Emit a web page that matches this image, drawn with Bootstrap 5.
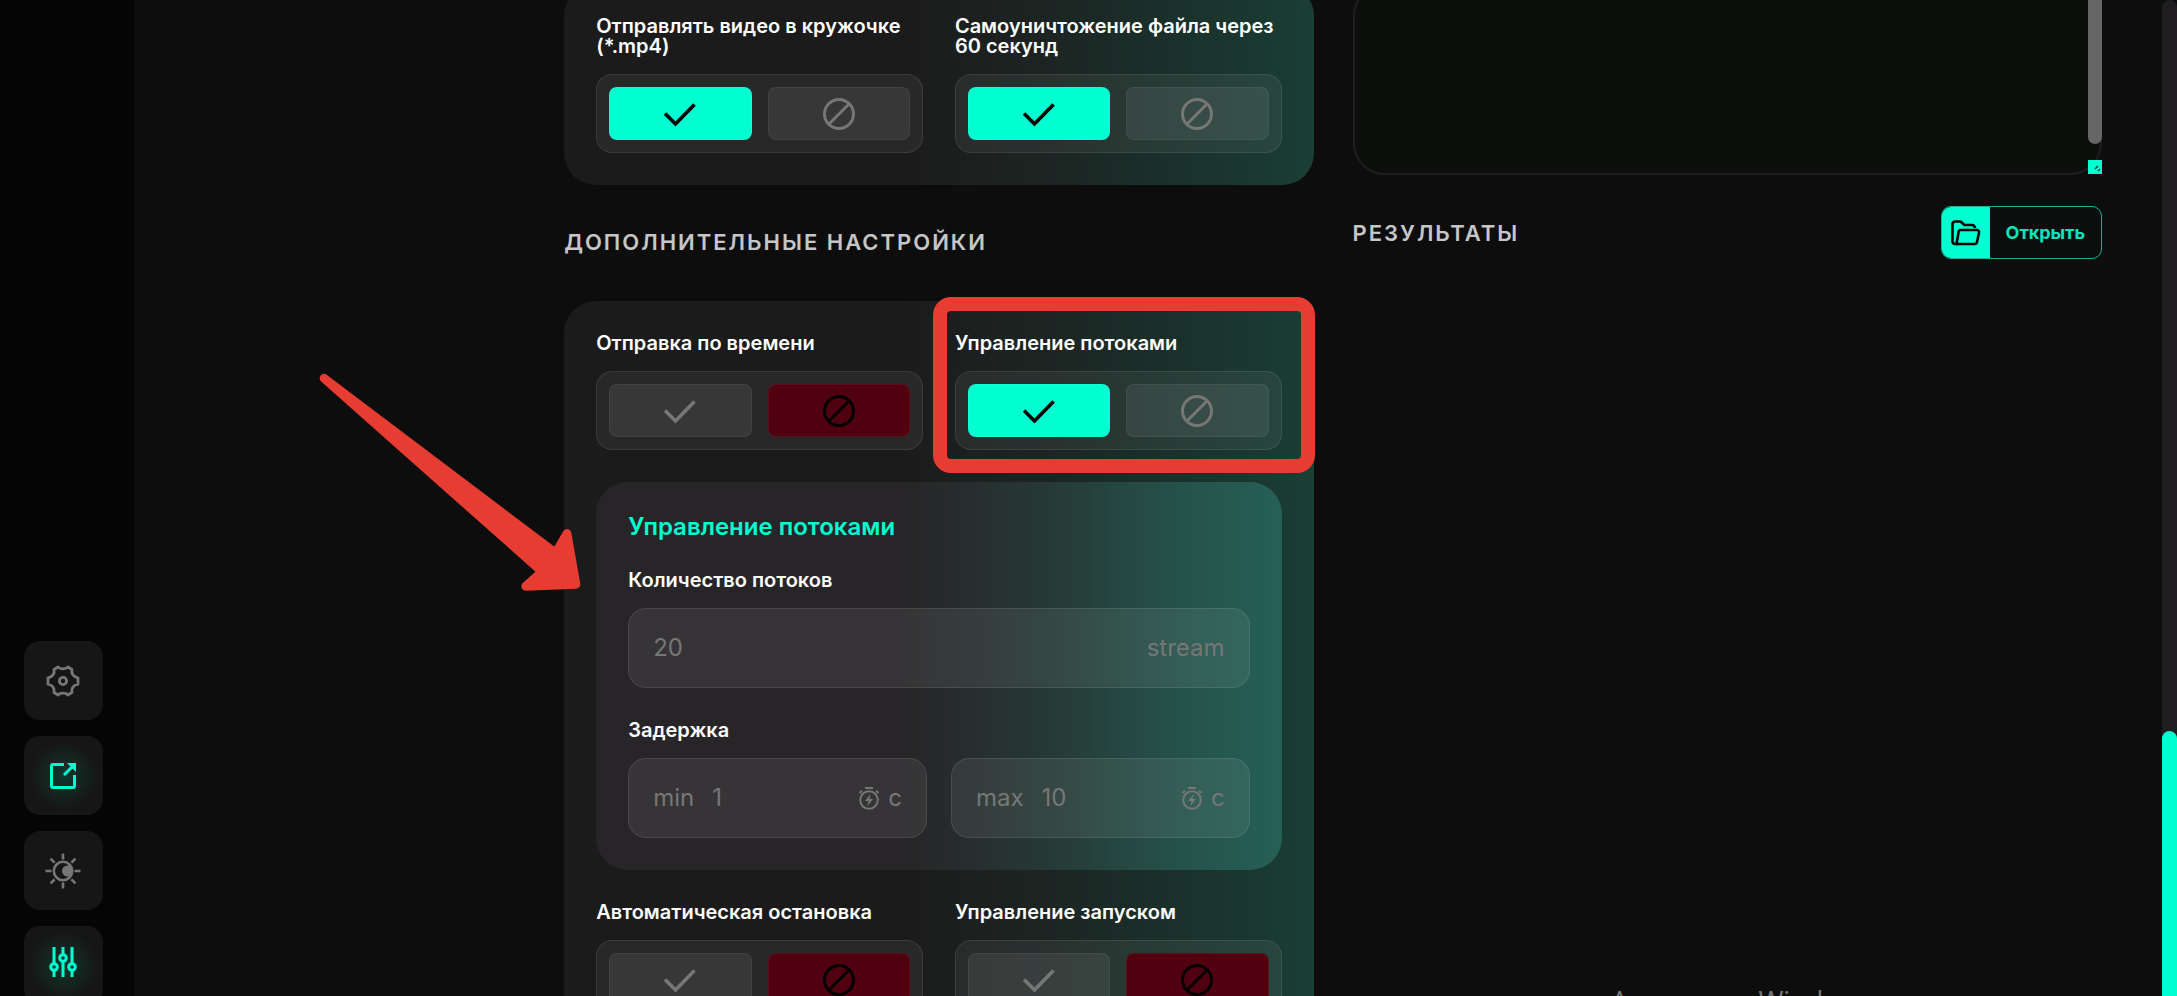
<!DOCTYPE html>
<html lang="ru" data-bs-theme="dark">
<head>
<meta charset="utf-8">
<meta name="viewport" content="width=device-width, initial-scale=1">
<title>Дополнительные настройки</title>
<link href="https://cdn.jsdelivr.net/npm/bootstrap@5.3.0/dist/css/bootstrap.min.css" rel="stylesheet">
<style>
  :root { --accent: #00ffd1; --muted: #777; --red: #e63c31; }
  body { background: #0e0d0e; font-family: Inter, "Noto Sans", sans-serif; color: #fff; }

  /* left rail */
  .rail { width: 134px; background: #050505; }
  .rail-list { margin-bottom: -9px; gap: 16px; }
  .rail-btn { width: 79px; height: 79px; padding: 0; border: 0; border-radius: 16px; background: #161616; color: var(--muted); }
  .rail-btn.lit { color: var(--accent); background: radial-gradient(circle, #10392f 0, #14261f 30%, #161616 62%); }

  /* three-part workspace */
  .workspace { display: grid; grid-template-columns: minmax(0, 391fr) minmax(0, 749fr) minmax(0, 749fr); gap: 39px; padding-right: 60px; min-width: 0; }
  .pane { margin-top: -16px; }
  .panel { border-radius: 32px; padding: 32px; background: linear-gradient(90deg, #1c1b1c 45%, #1c2523 65%, #1a342d 86%, #1a3e35 100%); }
  .panel-inner { border-radius: 32px; padding: 32px; margin: 32px 0; background: linear-gradient(90deg, #272527 45%, #263835 65%, #25524a 85%, #256056 100%); }
  .pair { display: grid; grid-template-columns: minmax(0, 1fr) minmax(0, 1fr); gap: 32px; }
  .pair-narrow { gap: 24px; }
  .section-title { font-size: 22px; line-height: 26px; font-weight: 600; letter-spacing: 2px; color: #c6c6c6; margin: 0; }
  .between { margin: 44px 0 46px; }
  .caption { display: block; font-size: 20px; line-height: 20px; font-weight: 600; margin: 0 0 18px; }
  .field-group { margin-top: 32px; }
  .inner-title { font-size: 24px; line-height: 26px; font-weight: 600; color: var(--accent); margin: 0 0 30px; }

  /* yes / no switch */
  .switch { display: grid; grid-template-columns: 1fr 1fr; gap: 16px; padding: 12px; border-radius: 16px;
            border: 1px solid rgba(255,255,255,.09); background: rgba(255,255,255,.06); }
  .opt { height: 53px; border-radius: 8px; border: 1px solid rgba(255,255,255,.06); background: rgba(255,255,255,.07);
         color: var(--muted); display: flex; align-items: center; justify-content: center; cursor: pointer; }
  .btn-check:checked + .opt-yes { background: var(--accent); color: #000; }
  .btn-check:checked + .opt-no { background: #50000f; color: #000; }

  /* numeric fields */
  .field { display: flex; align-items: center; height: 80px; padding: 0 24px; border-radius: 18px; font-size: 24px; color: var(--muted);
           border: 1px solid rgba(255,255,255,.09); background: rgba(255,255,255,.07); }
  .field input { flex: 1; min-width: 0; border: 0; background: none; padding: 0; color: var(--muted); outline: 0; }
  .field input::placeholder { color: var(--muted); opacity: 1; }
  .field label { margin-right: 18px; }

  /* log box */
  .log { display: block; width: 100%; height: 191px; resize: none; border-radius: 32px; border: 2px solid #1e1e1e; background: #0c0e0c; }
  .log-thumb { position: absolute; right: 0; top: 0; width: 14px; height: 160px; background: #666; border-radius: 7px; }
  .log-grip { position: absolute; right: 0; bottom: 1px; width: 14px; height: 14px; background: var(--accent); }
  .results { margin-top: 31px; }

  .open-btn { display: flex; padding: 0; height: 53px; border: 1px solid #14b394; border-radius: 10px; overflow: hidden; background: #0c0e0d;
              color: #08e3bd; font-size: 18px; font-weight: 700; }
  .open-icon { width: 48px; background: var(--accent); color: #000; }

  .page-track { width: 15px; background: #1f1d20; border-radius: 8px 8px 0 0; padding-top: 731px; }
  .page-thumb { background: var(--accent); border-radius: 8px 8px 0 0; }

  /* annotation marks */
  .mark-frame { position: absolute; inset: -36px -33px -23px -22px; border: 14px solid var(--red); border-radius: 18px; pointer-events: none; }
  .mark-arrow { position: absolute; left: -264px; top: 50px; pointer-events: none; }
  .os-note { position: absolute; left: 74%; bottom: -23px; font: 27px/36px "Open Sans", sans-serif; color: #777; }
</style>
</head>
<body>
<svg class="d-none">
  <symbol id="i-check" viewBox="0 0 32 32"><path d="M1 15.500 11.500 26 30.500 6.500" fill="none" stroke="currentColor" stroke-width="3.600"/></symbol>
  <symbol id="i-ban" viewBox="0 0 32 32"><g fill="none" stroke="currentColor" stroke-width="3"><circle cx="16" cy="16" r="14.500"/><path d="M6 26 26 6"/></g></symbol>
  <symbol id="i-timer" viewBox="0 0 22 24"><g fill="none" stroke="currentColor" stroke-width="2"><circle cx="11" cy="14" r="8.800"/><path d="M7 2h8M1.500 7 4 4.800M20.500 7 18 4.800"/></g><path d="M12.500 8 7 15h3.500L9.500 20 15 13h-3.500z" fill="currentColor"/></symbol>
</svg>

<div class="d-flex vh-100 overflow-hidden position-relative">
  <nav class="rail d-flex flex-column justify-content-end align-items-center pe-2 flex-shrink-0" aria-label="Панель">
    <div class="rail-list d-flex flex-column">
      <button class="rail-btn" type="button" aria-label="Настройки">
        <svg width="34" height="34" viewBox="0 0 34 34" fill="none" stroke="currentColor" stroke-width="2.800" stroke-linejoin="round"><path d="M12.200 3 C14 5.500 20 5.500 21.800 3 L26 5.500 C25 9.500 27.500 13 32 13.800 L32 20.200 C27.500 21 25 24.500 26 28.500 L21.800 31 C20 28.500 14 28.500 12.200 31 L8 28.500 C9 24.500 6.500 21 2 20.200 L2 13.800 C6.500 13 9 9.500 8 5.500 Z"/><circle cx="17" cy="17" r="3.600"/></svg>
      </button>
      <button class="rail-btn lit" type="button" aria-label="Открыть в окне">
        <svg width="28" height="28" viewBox="0 0 28 28" fill="none" stroke="currentColor" stroke-width="3"><path d="M15 2.500H4A1.500 1.500 0 0 0 2.500 4v20A1.500 1.500 0 0 0 4 25.500h20a1.500 1.500 0 0 0 1.500-1.500V13M15 13 24 4"/><path d="M18 1h9v9z" fill="currentColor" stroke="none"/></svg>
      </button>
      <button class="rail-btn" type="button" aria-label="Тема">
        <svg width="36" height="36" viewBox="0 0 36 36" fill="none" stroke="currentColor" stroke-width="2.600"><circle cx="18" cy="18" r="9.200"/><path d="M18 .5v6M18 29.500v6M.5 18h6M29.500 18h6M5.600 5.600l4 4M26.400 26.400l4 4M5.600 30.400l4-4M26.400 9.600l4-4"/><circle cx="22.500" cy="18" r="5.500" fill="currentColor" stroke="none"/></svg>
      </button>
      <button class="rail-btn lit" type="button" aria-label="Параметры">
        <svg class="mb-2" width="28" height="32" viewBox="0 0 28 32" fill="none" stroke="currentColor" stroke-width="3"><path d="M5 1v17M5 25v6M14 1v7M14 15v16M23 1v17M23 25v6"/><circle cx="5" cy="21" r="3.300"/><circle cx="14" cy="12" r="3.300"/><circle cx="23" cy="21" r="3.300"/></svg>
      </button>
    </div>
  </nav>

  <main class="workspace flex-grow-1">
    <div></div>

    <form class="pane">
      <section class="panel">
        <div class="pair">
          <div>
            <span class="caption" id="c1">Отправлять видео в кружочке (*.mp4)</span>
            <div class="switch" role="radiogroup" aria-labelledby="c1">
              <div><input class="btn-check" type="radio" name="s1" id="s1y" checked><label class="opt opt-yes" for="s1y" aria-label="Да"><svg width="32" height="32"><use href="#i-check"/></svg></label></div>
              <div><input class="btn-check" type="radio" name="s1" id="s1n"><label class="opt opt-no" for="s1n" aria-label="Нет"><svg width="32" height="32"><use href="#i-ban"/></svg></label></div>
            </div>
          </div>
          <div>
            <span class="caption" id="c2">Самоуничтожение файла через 60 секунд</span>
            <div class="switch" role="radiogroup" aria-labelledby="c2">
              <div><input class="btn-check" type="radio" name="s2" id="s2y" checked><label class="opt opt-yes" for="s2y" aria-label="Да"><svg width="32" height="32"><use href="#i-check"/></svg></label></div>
              <div><input class="btn-check" type="radio" name="s2" id="s2n"><label class="opt opt-no" for="s2n" aria-label="Нет"><svg width="32" height="32"><use href="#i-ban"/></svg></label></div>
            </div>
          </div>
        </div>
      </section>

      <h2 class="section-title between">ДОПОЛНИТЕЛЬНЫЕ НАСТРОЙКИ</h2>

      <section class="panel position-relative">
        <div class="pair">
          <div>
            <span class="caption" id="c3">Отправка по времени</span>
            <div class="switch" role="radiogroup" aria-labelledby="c3">
              <div><input class="btn-check" type="radio" name="s3" id="s3y"><label class="opt opt-yes" for="s3y" aria-label="Да"><svg width="32" height="32"><use href="#i-check"/></svg></label></div>
              <div><input class="btn-check" type="radio" name="s3" id="s3n" checked><label class="opt opt-no" for="s3n" aria-label="Нет"><svg width="32" height="32"><use href="#i-ban"/></svg></label></div>
            </div>
          </div>
          <div class="position-relative">
            <span class="caption" id="c4">Управление потоками</span>
            <div class="switch" role="radiogroup" aria-labelledby="c4">
              <div><input class="btn-check" type="radio" name="s4" id="s4y" checked><label class="opt opt-yes" for="s4y" aria-label="Да"><svg width="32" height="32"><use href="#i-check"/></svg></label></div>
              <div><input class="btn-check" type="radio" name="s4" id="s4n"><label class="opt opt-no" for="s4n" aria-label="Нет"><svg width="32" height="32"><use href="#i-ban"/></svg></label></div>
            </div>
            <div class="mark-frame"></div>
          </div>
        </div>

        <div class="panel-inner">
          <h3 class="inner-title">Управление потоками</h3>
          <label class="caption" for="threads">Количество потоков</label>
          <div class="field">
            <input id="threads" type="text" placeholder="20"><span>stream</span>
          </div>
          <span class="caption field-group" id="c5">Задержка</span>
          <div class="pair pair-narrow" role="group" aria-labelledby="c5">
            <div class="field">
              <label for="dmin">min</label><input id="dmin" type="text" placeholder="1">
              <svg class="me-2" width="22" height="24"><use href="#i-timer"/></svg><span>с</span>
            </div>
            <div class="field">
              <label for="dmax">max</label><input id="dmax" type="text" placeholder="10">
              <svg class="me-2" width="22" height="24"><use href="#i-timer"/></svg><span>с</span>
            </div>
          </div>
        </div>

        <div class="pair">
          <div>
            <span class="caption" id="c6">Автоматическая остановка</span>
            <div class="switch" role="radiogroup" aria-labelledby="c6">
              <div><input class="btn-check" type="radio" name="s6" id="s6y"><label class="opt opt-yes" for="s6y" aria-label="Да"><svg width="32" height="32"><use href="#i-check"/></svg></label></div>
              <div><input class="btn-check" type="radio" name="s6" id="s6n" checked><label class="opt opt-no" for="s6n" aria-label="Нет"><svg width="32" height="32"><use href="#i-ban"/></svg></label></div>
            </div>
          </div>
          <div>
            <span class="caption" id="c7">Управление запуском</span>
            <div class="switch" role="radiogroup" aria-labelledby="c7">
              <div><input class="btn-check" type="radio" name="s7" id="s7y"><label class="opt opt-yes" for="s7y" aria-label="Да"><svg width="32" height="32"><use href="#i-check"/></svg></label></div>
              <div><input class="btn-check" type="radio" name="s7" id="s7n" checked><label class="opt opt-no" for="s7n" aria-label="Нет"><svg width="32" height="32"><use href="#i-ban"/></svg></label></div>
            </div>
          </div>
        </div>

        <svg class="mark-arrow" width="300" height="260" viewBox="0 0 900 780"><path d="M72 82 767 606 801 547 828 700 677 706 726 662Z" fill="#e63c31" stroke="#e63c31" stroke-width="26" stroke-linejoin="round"/></svg>
      </section>
    </form>

    <section class="pane">
      <div class="position-relative">
        <textarea class="log" aria-label="Журнал"></textarea>
        <div class="log-thumb"></div>
        <svg class="log-grip" viewBox="0 0 14 14"><path d="M7 9l3-3M10 11l2-2" stroke="#07483c" stroke-width="1.500"/></svg>
      </div>
      <div class="d-flex justify-content-between align-items-center results">
        <h2 class="section-title">РЕЗУЛЬТАТЫ</h2>
        <button class="open-btn" type="button">
          <span class="open-icon h-100 d-flex align-items-center justify-content-center"><svg width="30" height="26" viewBox="0 0 30 26" fill="none" stroke="currentColor" stroke-width="2.600" stroke-linejoin="round"><path d="M7 24H4a2.500 2.500 0 0 1-2.500-2.500V4A2.500 2.500 0 0 1 4 1.500h5.500l4 3.500H21a3 3 0 0 1 3 3"/><path d="M9.500 10h16.500a2 2 0 0 1 2 2.400L26 22a2.500 2.500 0 0 1-2.500 2H5.500L7.600 12a2.200 2.200 0 0 1 1.900-2z"/></svg></span>
          <span class="px-3 h-100 d-flex align-items-center">Открыть</span>
        </button>
      </div>
    </section>
  </main>

  <div class="page-track d-flex flex-column flex-shrink-0"><div class="page-thumb flex-grow-1"></div></div>
  <div class="os-note">Активация Windows</div>
</div>
<script src="https://cdn.jsdelivr.net/npm/bootstrap@5.3.0/dist/js/bootstrap.bundle.min.js"></script>
</body>
</html>
